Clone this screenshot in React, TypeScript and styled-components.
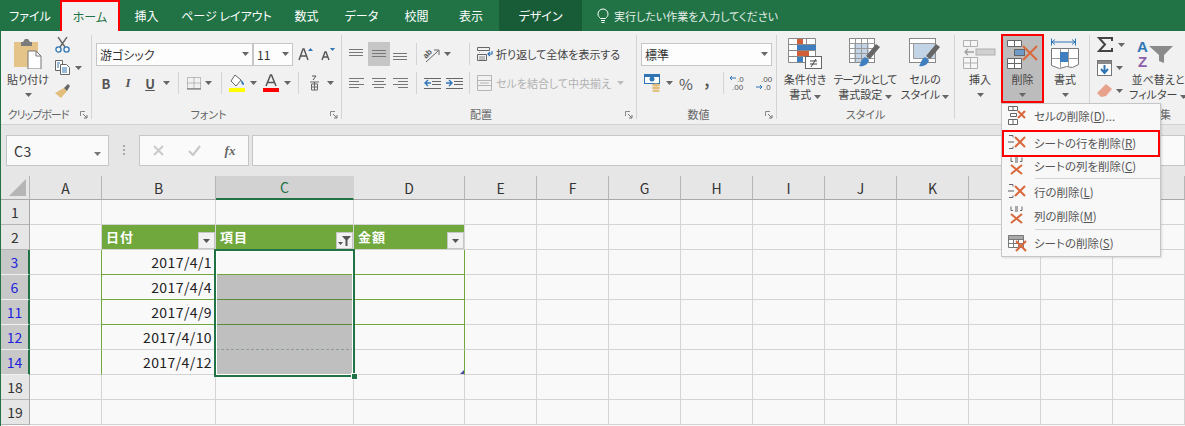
import React from 'react';
import styled, { createGlobalStyle } from 'styled-components';

const GREEN = '#217346';
const TABLE = '#70a83e';

const GlobalStyle = createGlobalStyle`
  html, body { margin: 0; padding: 0; background: #f9f9f9; }
  body {
    font-family: "Noto Sans CJK JP", "Liberation Sans", sans-serif;
    font-feature-settings: "palt";
  }
`;

const Window = styled.div`
  position: relative;
  width: 1184px;
  height: 426px;
  overflow: hidden;
  border-left: 1px solid ${GREEN};
`;

/* ---------- title bar ---------- */
const TabBar = styled.div`
  display: flex;
  height: 31px;
  margin-left: -1px;
  background: ${GREEN};
`;

const Tab = styled.div<{ $w: number; $active?: boolean; $dark?: boolean }>`
  box-sizing: border-box;
  width: ${(p) => p.$w}px;
  display: flex;
  align-items: center;
  justify-content: center;
  font-size: 12px;
  color: ${(p) => (p.$active ? GREEN : '#fff')};
  background: ${(p) => (p.$active ? '#f1f1f1' : p.$dark ? '#185c37' : 'transparent')};
  border: ${(p) => (p.$active ? '2px solid #f00' : 'none')};
  border-bottom: none;
`;

const TellMe = styled.div`
  display: flex;
  align-items: center;
  gap: 5px;
  margin-left: 15px;
  font-size: 11px;
  color: #e4efe8;
`;

/* ---------- ribbon ---------- */
const Ribbon = styled.div`
  display: flex;
  height: 93px;
  background: #f1f1f1;
  border-bottom: 1px solid #d2d2d2;
`;

const Group = styled.div<{ $w: number }>`
  flex: none;
  width: ${(p) => p.$w}px;
  display: flex;
  flex-direction: column;
`;

const GroupBody = styled.div<{ $left?: number; $column?: boolean }>`
  height: 75px;
  box-sizing: border-box;
  padding-left: ${(p) => p.$left ?? 0}px;
  display: flex;
  flex-direction: ${(p) => (p.$column ? 'column' : 'row')};
`;

const GroupLabel = styled.div<{ $launch?: boolean; $tight?: boolean }>`
  position: relative;
  height: 18px;
  line-height: 16px;
  padding-right: ${(p) => (p.$launch ? 16 : 0)}px;
  text-align: center;
  font-size: 11px;
  letter-spacing: ${(p) => (p.$tight ? -1 : 0)}px;
  color: #666;
`;

const Launcher = styled.svg`
  position: absolute;
  right: 3px;
  top: 5px;
`;

const GroupLine = styled.div`
  flex: none;
  width: 1px;
  margin: 4px 0 5px;
  background: #d4d4d4;
`;

const ToolRow = styled.div<{ $top: number; $left?: number }>`
  display: flex;
  align-items: center;
  height: 24px;
  margin-top: ${(p) => p.$top}px;
  margin-left: ${(p) => p.$left ?? 0}px;
`;

const Tool = styled.div<{ $w: number; $on?: boolean }>`
  flex: none;
  width: ${(p) => p.$w}px;
  height: 24px;
  display: flex;
  align-items: center;
  justify-content: center;
  background: ${(p) => (p.$on ? '#c6c6c6' : 'transparent')};
`;

const StyleLetter = styled(Tool)<{ $kind: 'b' | 'i' | 'u' }>`
  font-family: ${(p) => (p.$kind === 'i' ? '"Liberation Serif", serif' : 'inherit')};
  font-style: ${(p) => (p.$kind === 'i' ? 'italic' : 'normal')};
  text-decoration: ${(p) => (p.$kind === 'u' ? 'underline' : 'none')};
  font-weight: 700;
  font-size: 13px;
  color: #555;
`;

const SymbolTool = styled(Tool)<{ $bold?: boolean }>`
  box-sizing: border-box;
  padding-bottom: ${(p) => (p.$bold ? 8 : 0)}px;
  font-size: 15px;
  font-weight: ${(p) => (p.$bold ? 700 : 400)};
  color: #555;
`;

const ToolDivider = styled.div<{ $before: number; $after: number }>`
  flex: none;
  width: 1px;
  height: 22px;
  margin-left: ${(p) => p.$before}px;
  margin-right: ${(p) => p.$after}px;
  background: #d4d4d4;
`;

const Select = styled.div<{ $w: number }>`
  flex: none;
  box-sizing: border-box;
  width: ${(p) => p.$w}px;
  height: 23px;
  padding: 0 3px;
  display: flex;
  align-items: center;
  justify-content: space-between;
  background: #fdfdfd;
  border: 1px solid #c6c6c6;
  font-size: 12px;
  color: #333;
`;

const LabelText = styled.span<{ $muted?: boolean }>`
  margin-left: 3px;
  font-size: 11px;
  white-space: nowrap;
  color: ${(p) => (p.$muted ? '#b1b1b1' : '#444')};
`;

const BigButton = styled.div<{ $w: number; $marked?: boolean }>`
  flex: none;
  box-sizing: border-box;
  width: ${(p) => p.$w}px;
  height: 69px;
  margin-top: 3px;
  display: flex;
  flex-direction: column;
  align-items: center;
  font-size: 11px;
  line-height: 15px;
  color: #444;
  white-space: nowrap;
  background: ${(p) => (p.$marked ? '#bcbcbc' : 'transparent')};
  outline: ${(p) => (p.$marked ? '2px solid #f00' : 'none')};
  outline-offset: -2px;
`;

const TightLine = styled.div`
  letter-spacing: -0.8px;
`;

const BigIcon = styled.div`
  height: 35px;
  margin-bottom: 3px;
  display: flex;
  align-items: flex-end;
  justify-content: center;
`;

const BigCaret = styled.div`
  height: 15px;
  display: flex;
  align-items: center;
`;

const StackColumn = styled.div<{ $w: number }>`
  flex: none;
  box-sizing: border-box;
  width: ${(p) => p.$w}px;
  padding-top: 2px;
  display: flex;
  flex-direction: column;
`;

const StackTool = styled.div<{ $gap?: number }>`
  height: 23px;
  display: flex;
  align-items: center;
  gap: ${(p) => p.$gap ?? 4}px;
`;

/* ---------- formula bar ---------- */
const FormulaBar = styled.div`
  display: flex;
  align-items: center;
  height: 51px;
  padding: 0 0 0 5px;
  background: #e6e6e6;
  box-sizing: border-box;
`;

const FieldBox = styled.div<{ $w?: number }>`
  box-sizing: border-box;
  width: ${(p) => (p.$w ? `${p.$w}px` : 'auto')};
  flex: ${(p) => (p.$w ? 'none' : '1')};
  height: 31px;
  margin-left: ${(p) => (p.$w ? 0 : 3)}px;
  display: flex;
  align-items: center;
  background: #fafafa;
  border: 1px solid #c6c6c6;
`;

const NameText = styled.span`
  flex: 1;
  padding-left: 7px;
  font-size: 14px;
  color: #333;
  letter-spacing: 0.5px;
`;

const NameCaret = styled.span`
  padding: 0 7px 4px;
`;

const GripDots = styled.div`
  width: 2px;
  margin: 0 14px;
  height: 11px;
  background: repeating-linear-gradient(#aaa 0 2px, transparent 2px 4px);
`;

const FxSlot = styled.div`
  width: 36px;
  display: flex;
  justify-content: center;
`;

const FxText = styled.span`
  font-family: "Liberation Serif", serif;
  font-style: italic;
  font-weight: 700;
  font-size: 13px;
  color: #666;
`;

/* ---------- sheet ---------- */
const Sheet = styled.div`
  display: grid;
  grid-template-columns: 29px 72px 114px 138px 111px repeat(10, 72px);
  grid-template-rows: 24px repeat(9, 25px);
  background: #f9f9f9;
`;

const Corner = styled.div`
  display: flex;
  align-items: flex-end;
  justify-content: flex-end;
  padding: 0 3px 3px 0;
  background: #e6e6e6;
  border-right: 1px solid #b5b5b5;
  border-bottom: 1px solid #a8a8a8;
`;

const ColHead = styled.div<{ $on?: boolean }>`
  display: flex;
  align-items: center;
  justify-content: center;
  font-size: 14px;
  color: ${(p) => (p.$on ? GREEN : '#333')};
  background: ${(p) => (p.$on ? '#d2d2d2' : '#e6e6e6')};
  border-right: 1px solid ${(p) => (p.$on ? '#d2d2d2' : '#b5b5b5')};
  border-bottom: ${(p) => (p.$on ? `2px solid ${GREEN}` : '1px solid #a8a8a8')};
`;

const RowHead = styled.div<{ $on?: boolean }>`
  display: flex;
  align-items: center;
  justify-content: center;
  font-size: 14px;
  color: ${(p) => (p.$on ? '#2222dd' : '#333')};
  background: ${(p) => (p.$on ? '#c8c8c8' : '#e6e6e6')};
  border-right: ${(p) => (p.$on ? `2px solid ${GREEN}` : '1px solid #a8a8a8')};
  border-bottom: 1px solid ${(p) => (p.$on ? '#f0f0f0' : '#b5b5b5')};
`;

const Cell = styled.div<{
  $head?: boolean;
  $band?: boolean;
  $left?: boolean;
  $right?: boolean;
  $fill?: boolean;
  $dash?: boolean;
}>`
  position: relative;
  box-sizing: border-box;
  display: flex;
  align-items: ${(p) => (p.$head ? 'flex-end' : 'center')};
  justify-content: ${(p) => (p.$head ? 'space-between' : 'flex-end')};
  padding-right: ${(p) => (p.$head ? 0 : 3)}px;
  font-size: 14px;
  letter-spacing: 0.4px;
  color: #222;
  background: ${(p) => (p.$head ? TABLE : p.$fill ? '#bfbfbf' : 'transparent')};
  border-left: ${(p) => (p.$left ? `1px solid ${TABLE}` : 'none')};
  margin-left: ${(p) => (p.$left ? -1 : 0)}px;
  border-right: 1px solid ${(p) => (p.$right ? TABLE : '#d4d4d4')};
  border-bottom: 1px ${(p) => (p.$dash ? 'dashed #8f9f8f' : `solid ${p.$band ? (p.$fill ? '#5b8a3a' : TABLE) : '#d4d4d4'}`)};
`;

const HeadText = styled.span`
  align-self: center;
  margin: -2px 0 0 4px;
  font-size: 13px;
  font-weight: 700;
  letter-spacing: 1px;
  color: #fff;
`;

const FilterButton = styled.div`
  box-sizing: border-box;
  width: 17px;
  height: 17px;
  display: flex;
  align-items: center;
  justify-content: center;
  background: #f2f2f2;
  border: 1px solid #c6c6c6;
`;

const ResizeMark = styled.div`
  position: absolute;
  right: 0;
  bottom: 0;
  width: 0;
  height: 0;
  border-left: 4px solid transparent;
  border-bottom: 4px solid #4a4a9e;
`;

/* the range C3:C14 laid over the cells */
const Selection = styled.div`
  position: absolute;
  z-index: 2;
  left: -2px;
  top: -1px;
  box-sizing: border-box;
  width: 141px;
  height: 128px;
  border: 2px solid ${GREEN};
  box-shadow: inset 0 0 0 1px #fff;
  pointer-events: none;
`;

const FillHandle = styled.div`
  position: absolute;
  right: -5px;
  bottom: -5px;
  width: 5px;
  height: 5px;
  background: ${GREEN};
  border: 1px solid #fff;
`;

/* ---------- dropdown ---------- */
const Menu = styled.div`
  position: absolute;
  z-index: 3;
  left: 1000px;
  top: 103px;
  box-sizing: border-box;
  width: 160px;
  height: 154px;
  background: #f8f8f8;
  border: 1px solid #c6c6c6;
  box-shadow: 1px 1px 2px rgba(0, 0, 0, 0.12);
`;

const MenuItem = styled.div<{ $h: number; $marked?: boolean; $gap?: number }>`
  box-sizing: border-box;
  height: ${(p) => p.$h}px;
  margin-top: ${(p) => p.$gap ?? 0}px;
  padding-bottom: 2px;
  display: flex;
  align-items: center;
  font-size: 11.5px;
  color: #555;
  outline: ${(p) => (p.$marked ? '2px solid #f00' : 'none')};
  outline-offset: -2px;
`;

const MenuIcon = styled.div`
  flex: none;
  width: 32px;
  display: flex;
  justify-content: center;
`;

const MenuLine = styled.div`
  height: 1px;
  margin: 1px 0 1px 33px;
  background: #d4d4d4;
`;

const Key = styled.span`
  text-decoration: underline;
`;

/* ---------- icons ---------- */
const Caret = ({ c = '#666' }: { c?: string }) => (
  <svg width="7" height="4" viewBox="0 0 7 4"><path d="M0 0h7L3.500 4z" fill={c} /></svg>
);

const LaunchMark = () => (
  <Launcher width="8" height="8" viewBox="0 0 8 8">
    <path d="M.5 5V.5H5" fill="none" stroke="#888" />
    <path d="M3 3l4 4M7 4v3H4" fill="none" stroke="#777" />
  </Launcher>
);

const Lines = ({ rows, w = 16 }: { rows: number[][]; w?: number }) => (
  <svg width={w} height="14" viewBox={`0 0 ${w} 14`}>
    {rows.map(([x1, x2, y], i) => (
      <path key={i} d={`M${x1} ${y + 0.5}H${x2}`} stroke="#777" fill="none" />
    ))}
  </svg>
);

const PasteIcon = () => (
  <svg width="28" height="30" viewBox="0 0 28 30">
    <rect x="0" y="3" width="24" height="25" fill="#e5c48a" />
    <path d="M7 3h2l2-3h3l2 3h2v4H7z" fill="#7b7b7b" />
    <path d="M14 12h8l5 5v13H14z" fill="#fff" stroke="#777" />
    <path d="M22 12v5h5" fill="none" stroke="#777" />
  </svg>
);

const ScissorsIcon = () => (
  <svg width="15" height="16" viewBox="0 0 15 16">
    <path d="M3 0l7 10M12 0L5 10" stroke="#666" strokeWidth="1.4" fill="none" />
    <circle cx="3.500" cy="12.500" r="2.600" fill="none" stroke="#2f75b5" strokeWidth="1.3" />
    <circle cx="11.500" cy="12.500" r="2.600" fill="none" stroke="#2f75b5" strokeWidth="1.3" />
  </svg>
);

const CopyIcon = () => (
  <svg width="16" height="15" viewBox="0 0 16 15">
    <path d="M.5.500h7v10h-7z" fill="#fff" stroke="#666" />
    <path d="M5.500 4.500h6l3 3v7h-9z" fill="#fff" stroke="#666" />
    <path d="M2 3h3M2 5h2M2 7h2M7 8h5M7 10h5M7 12h5" stroke="#2f75b5" />
  </svg>
);

const BrushIcon = () => (
  <svg width="16" height="15" viewBox="0 0 16 15">
    <path d="M9 5l3 3L6 15 0 10z" fill="#e3bd7b" />
    <path d="M9 5l4-4 2 2-3 5z" fill="#666" />
  </svg>
);

const BigA = ({ up }: { up?: boolean }) => (
  <svg width="16" height="14" viewBox="0 0 16 14">
    <path d={up ? 'M1 13L5 2h1l4 11M2.500 9h6' : 'M2 13L5 5h1l3 8M3 10h5'} stroke="#555" strokeWidth="1.4" fill="none" />
    <path d={up ? 'M10 4l2.500-3L15 4z' : 'M10 1h5l-2.500 3z'} fill="#2f75b5" />
  </svg>
);

const BorderIcon = () => (
  <svg width="16" height="14" viewBox="0 0 16 14">
    <path d="M1.500 1.500h13v11h-13zM8 1.500v11M1.500 7h13" fill="none" stroke="#888" strokeDasharray="1 1" />
    <path d="M1 13h14" stroke="#666" />
  </svg>
);

const FillIcon = () => (
  <svg width="17" height="18" viewBox="0 0 17 18">
    <path d="M6 1l6 5-5 6-5-5z" fill="#fff" stroke="#666" />
    <path d="M12 6c2 1 3 3 3 5-2 0-3-2-3-5z" fill="#2f75b5" />
    <rect y="14" width="16" height="4" fill="#ff0" />
  </svg>
);

const FontColorIcon = () => (
  <svg width="16" height="18" viewBox="0 0 16 18">
    <path d="M3 12L7.500 1h1L13 12M4.500 8.500h7" stroke="#555" strokeWidth="1.500" fill="none" />
    <rect y="14" width="16" height="4" fill="#f00" />
  </svg>
);

const PhoneticIcon = () => (
  <svg width="9" height="16" viewBox="0 0 9 16">
    <path d="M2 1h4M6 1L3 5" stroke="#555" fill="none" />
    <path d="M0 7h9M1.500 9h6v6h-6zM4.500 7v8M1.500 12h6" stroke="#666" fill="none" />
  </svg>
);

const OrientIcon = () => (
  <svg width="18" height="17" viewBox="0 0 18 17">
    <text x="1" y="10" fontSize="8" fontWeight="700" fill="#555" fontFamily="Liberation Sans" transform="rotate(-45 6 8)">ab</text>
    <path d="M4 16L16 5M12 4h5v5" stroke="#666" fill="none" />
  </svg>
);

const IndentIcon = ({ flip }: { flip?: boolean }) => (
  <svg width="17" height="13" viewBox="0 0 17 13">
    <path d="M0 1.500h17M8 4.500h9M8 7.500h9M0 11.500h17" stroke="#666" fill="none" />
    <path d={flip ? 'M0 6h6M3 3l3 3-3 3' : 'M1 6h6M4 3L1 6l3 3'} stroke="#2f75b5" strokeWidth="1.400" fill="none" />
  </svg>
);

const WrapIcon = () => (
  <svg width="16" height="16" viewBox="0 0 16 16">
    <path d="M.5 1.500h12v3H.5zM.5 8.500h9v6h-9zM3 6.500h-.5" fill="none" stroke="#666" />
    <path d="M2 11h6M2 13h6" stroke="#888" />
    <path d="M15 5v3h-4M13 6l-2 2 2 2" fill="none" stroke="#2f75b5" strokeWidth="1.200" />
  </svg>
);

const MergeIcon = () => (
  <svg width="15" height="16" viewBox="0 0 15 16">
    <path d="M.5.500h14v15H.5zM.5 5.500h14M.5 10.500h14M3 8h9" fill="none" stroke="#b5b5b5" />
  </svg>
);

const MoneyIcon = () => (
  <svg width="17" height="18" viewBox="0 0 17 18">
    <rect x=".5" y=".5" width="15" height="9" fill="#fff" stroke="#2f75b5" />
    <rect x="1" y="1" width="14" height="2" fill="#2f75b5" />
    <circle cx="8" cy="5" r="2.500" fill="#2f75b5" />
    <ellipse cx="12" cy="11" rx="4" ry="1.500" fill="#e3bd7b" />
    <ellipse cx="12" cy="14" rx="4" ry="1.500" fill="#e3bd7b" />
    <ellipse cx="12" cy="17" rx="4" ry="1" fill="#e3bd7b" />
  </svg>
);

const DecimalIcon = ({ more }: { more?: boolean }) => (
  <svg width="18" height="16" viewBox="0 0 18 16">
    <text x={more ? 6 : 8} y="7" fontSize="8" fill="#555" fontFamily="Liberation Sans">{more ? '.00' : '.0'}</text>
    <text x={more ? 9 : 3} y="15" fontSize="8" fill="#555" fontFamily="Liberation Sans">{more ? '.0' : '.00'}</text>
    <path d={more ? 'M1 12h6M5 10l2 2-2 2' : 'M1 3h6M3 1L1 3l2 2'} stroke="#2f75b5" fill="none" />
  </svg>
);

const CondFormatIcon = () => (
  <svg width="35" height="31" viewBox="0 0 35 31">
    <path d="M.5.500h27v24H.5zM.5 6.500h27M.5 12.500h27M.5 18.500h27M9.500.5v24M18.500.5v24" fill="#fff" stroke="#888" />
    <rect x="9" y="1" width="6" height="5" fill="#d0603a" />
    <rect x="9" y="7" width="19" height="5" fill="#3f7fc0" />
    <rect x="9" y="13" width="12" height="5" fill="#d0603a" />
    <rect x="9" y="19" width="6" height="5" fill="#3f7fc0" />
    <rect x="17.500" y="18.500" width="16" height="12" fill="#fff" stroke="#666" />
    <path d="M22 23h7M22 26h7M28 21l-5 8" stroke="#444" fill="none" />
  </svg>
);

const TableBrushIcon = ({ plain }: { plain?: boolean }) => (
  <svg width="32" height="31" viewBox="0 0 32 31">
    {plain ? (
      <>
        <rect x=".5" y=".5" width="26" height="24" fill="#fff" stroke="#888" />
        <rect x="4" y="6" width="22" height="15" fill="#c3d4e6" />
        <path d="M.5 5.500h26M4.500 5.500v15h22" stroke="#999" fill="none" />
      </>
    ) : (
      <>
        <rect x=".5" y=".5" width="25" height="24" fill="#fff" stroke="#888" />
        <rect x="5" y="6" width="15" height="18" fill="#c3d4e6" />
        <path d="M.5 5.500h25M.5 10.500h25M.5 15.500h25M.5 20.500h25M6.500.5v24M12.500.5v24M18.500.5v24" stroke="#999" fill="none" />
      </>
    )}
    <path d="M27 6l4 3-10 12-4-3z" fill="#666" />
    <path d="M16 19l4 3c-1 5-6 7-10 6 2-2 2-7 6-9z" fill="#3f7fc0" />
  </svg>
);

const InsertIcon = () => (
  <svg width="34" height="29" viewBox="0 0 34 29">
    <path d="M.5.500h14v6H.5zM7.500.5v6M.5 17.500h14v11H.5zM.5 23h14M7.500 17.500v11" fill="#f6f6f6" stroke="#b0b0b0" />
    <rect x="13" y="9" width="19" height="6" fill="#d0d0d0" stroke="#b0b0b0" />
    <path d="M2 12h9M5 9l-3 3 3 3" stroke="#a0a0a0" strokeWidth="1.400" fill="none" />
  </svg>
);

const DeleteIcon = () => (
  <svg width="32" height="29" viewBox="0 0 32 29">
    <path d="M.5.500h14v6H.5zM7.500.5v6M.5 18.500h14v10H.5zM.5 23.500h14M7.500 18.500v10" fill="#fff" stroke="#666" />
    <rect x="7.500" y="9.500" width="10" height="6" fill="#6e9ac8" stroke="#666" />
    <path d="M16 6l14 14M30 6L16 20" stroke="#d9683c" strokeWidth="2" fill="none" />
  </svg>
);

const FormatIcon = () => (
  <svg width="28" height="31" viewBox="0 0 28 31">
    <path d="M1 4h23M4 1.500L1 4l3 2.500M21 1.500L24 4l-3 2.500M.5.500v7M24.500.5v7" stroke="#2f75b5" fill="none" />
    <path d="M.5 10.500h27v16l-6 3-6-1-7 2-8-3z" fill="#fff" stroke="#777" />
    <path d="M9.500 10.500v19M17.500 10.500v18M.5 20.500h27" stroke="#999" fill="none" />
    <rect x="9" y="14" width="8" height="10" fill="#3f7fc0" />
  </svg>
);

const SumIcon = () => (
  <svg width="16" height="15" viewBox="0 0 16 15">
    <path d="M15 4V1H2l6 6.500L2 14h13v-3" fill="none" stroke="#444" strokeWidth="2" />
  </svg>
);

const FillDownIcon = () => (
  <svg width="15" height="16" viewBox="0 0 15 16">
    <rect x=".5" y=".5" width="14" height="15" fill="#fff" stroke="#777" />
    <rect x="1" y="1" width="13" height="3" fill="#888" />
    <path d="M7.500 5v8M4 9l3.500 4L11 9" stroke="#2f75b5" strokeWidth="2" fill="none" />
  </svg>
);

const EraserIcon = () => (
  <svg width="15" height="13" viewBox="0 0 15 13">
    <path d="M9 0l6 5-6 7-5 1-4-4z" fill="#e8a28c" />
  </svg>
);

const SortFilterIcon = () => (
  <svg width="42" height="30" viewBox="0 0 42 30">
    <text x="0" y="13" fontSize="15" fontWeight="700" fill="#2f75b5" fontFamily="Liberation Sans">A</text>
    <text x="1" y="28" fontSize="15" fontWeight="700" fill="#8d5fa8" fontFamily="Liberation Sans">Z</text>
    <path d="M12 7h24l-9 9v8l-5-2v-6z" fill="#8a8a8a" />
  </svg>
);

const Bulb = () => (
  <svg width="12" height="16" viewBox="0 0 12 16">
    <path d="M3.500 10.500C2 9 1 8 1 6a5 5 0 0 1 10 0c0 2-1 3-2.500 4.500zM4 12.500h4M4.500 14.500h3" fill="none" stroke="#fff" />
  </svg>
);

const CrossMark = () => (
  <svg width="11" height="11" viewBox="0 0 11 11">
    <path d="M1 1l9 9M10 1L1 10" stroke="#c9c9c9" strokeWidth="1.800" fill="none" />
  </svg>
);

const CheckMark = () => (
  <svg width="13" height="11" viewBox="0 0 13 11">
    <path d="M1 6l4 4 7-9" stroke="#c9c9c9" strokeWidth="2.200" fill="none" />
  </svg>
);

const CornerMark = () => (
  <svg width="17" height="17" viewBox="0 0 17 17"><path d="M17 0v17H0z" fill="#b5b5b5" /></svg>
);

const MenuGlyph = ({ kind }: { kind: 'cell' | 'row' | 'col' | 'sheet' }) => {
  const x = kind === 'cell' ? 'M10 5l7 7M17 5l-7 7' : kind === 'col' ? 'M3 8l11 9M14 8L3 17' : 'M7 4l10 10M17 4L7 14';
  return (
    <svg width="20" height="19" viewBox="0 0 20 19">
      {kind === 'cell' && <path d="M.5.500h9v4h-9zM5 .5v4M.5 13.500h9v5h-9zM5 13.500v5M2.500 7.500h6v3h-6z" fill="#fff" stroke="#666" />}
      {kind === 'row' && <path d="M1 2.500h4M1 15.500h4M5 2.500v2M5 13.500v2" stroke="#666" fill="none" />}
      {kind === 'row' && <rect x="0" y="8" width="6" height="2" fill="#aaa" />}
      {kind === 'col' && <path d="M3 .5v4M14 .5v4M3 4.500h2M12 4.500h2" stroke="#666" fill="none" />}
      {kind === 'col' && <rect x="7" y="0" width="3" height="6" fill="#aaa" />}
      {kind === 'sheet' && <path d="M.5 2.500h15v12H.5zM.5 6.500h15M.5 10.500h15M5.500 2.500v12M10.500 2.500v12" fill="#fff" stroke="#777" />}
      {kind === 'sheet' && <rect x="1" y="3" width="14" height="3" fill="#aaa" />}
      <path d={kind === 'sheet' ? 'M8 8l10 10M18 8L8 18' : x} stroke="#d9683c" strokeWidth="2" fill="none" />
    </svg>
  );
};

const FunnelMark = () => (
  <svg width="13" height="10" viewBox="0 0 13 10">
    <path d="M0 6h5L2.500 9z" fill="#555" />
    <path d="M4 0h9L9.500 4v6H7.500V4z" fill="#555" />
  </svg>
);

/* ---------- data ---------- */
const COLUMNS = ['A', 'B', 'C', 'D', 'E', 'F', 'G', 'H', 'I', 'J', 'K', 'L', 'M', 'N'];

// these headers sit behind the open menu
const UNDER_MENU = ['L', 'M', 'N'];

const ROWS = [
  { no: 1 },
  { no: 2, head: true },
  { no: 3, date: '2017/4/1', on: true, band: true, first: true },
  { no: 6, date: '2017/4/4', on: true, band: true, fill: true },
  { no: 11, date: '2017/4/9', on: true, band: true, fill: true },
  { no: 12, date: '2017/4/10', on: true, fill: true, dash: true },
  { no: 14, date: '2017/4/12', on: true, fill: true, last: true },
  { no: 18 },
  { no: 19 },
];

const HEADINGS: Record<string, string> = { B: '日付', C: '項目', D: '金額' };

const App = () => {
  return (
    <Window>
      <GlobalStyle />
      <TabBar>
        <Tab $w={60}>ファイル</Tab>
        <Tab $w={60} $active>ホーム</Tab>
        <Tab $w={53}>挿入</Tab>
        <Tab $w={107}>ページ レイアウト</Tab>
        <Tab $w={53}>数式</Tab>
        <Tab $w={57}>データ</Tab>
        <Tab $w={53}>校閲</Tab>
        <Tab $w={56}>表示</Tab>
        <Tab $w={83} $dark>デザイン</Tab>
        <TellMe><Bulb />実行したい作業を入力してください</TellMe>
      </TabBar>

      <Ribbon>
        <Group $w={90}>
          <GroupBody>
            <BigButton $w={54}>
              <BigIcon><PasteIcon /></BigIcon>
              <div>貼り付け</div>
              <BigCaret><Caret /></BigCaret>
            </BigButton>
            <StackColumn $w={36}>
              <StackTool><ScissorsIcon /></StackTool>
              <StackTool><CopyIcon /><Caret /></StackTool>
              <StackTool><BrushIcon /></StackTool>
            </StackColumn>
          </GroupBody>
          <GroupLabel $launch $tight>クリップボード<LaunchMark /></GroupLabel>
        </Group>
        <GroupLine />

        <Group $w={249}>
          <GroupBody $column>
            <ToolRow $top={11} $left={4}>
              <Select $w={157}><span>游ゴシック</span><Caret /></Select>
              <Select $w={40}><span>11</span><Caret /></Select>
              <Tool $w={26}><BigA up /></Tool>
              <Tool $w={18}><BigA /></Tool>
            </ToolRow>
            <ToolRow $top={5} $left={3}>
              <StyleLetter $w={22} $kind="b">B</StyleLetter>
              <StyleLetter $w={22} $kind="i">I</StyleLetter>
              <StyleLetter $w={22} $kind="u">U</StyleLetter>
              <Tool $w={11}><Caret /></Tool>
              <ToolDivider $before={6} $after={6} />
              <Tool $w={17}><BorderIcon /></Tool>
              <Tool $w={13}><Caret /></Tool>
              <ToolDivider $before={6} $after={5} />
              <Tool $w={20}><FillIcon /></Tool>
              <Tool $w={12}><Caret /></Tool>
              <Tool $w={24}><FontColorIcon /></Tool>
              <Tool $w={9}><Caret /></Tool>
              <ToolDivider $before={6} $after={5} />
              <Tool $w={20}><PhoneticIcon /></Tool>
              <Tool $w={12}><Caret /></Tool>
            </ToolRow>
          </GroupBody>
          <GroupLabel $launch>フォント<LaunchMark /></GroupLabel>
        </Group>
        <GroupLine />

        <Group $w={294}>
          <GroupBody $column>
            <ToolRow $top={11} $left={4}>
              <Tool $w={22}><Lines rows={[[0, 14, 2], [0, 14, 5], [0, 14, 8]]} /></Tool>
              <Tool $w={22} $on><Lines rows={[[1, 15, 3], [1, 15, 6], [1, 15, 9]]} /></Tool>
              <Tool $w={22}><Lines rows={[[0, 14, 6], [0, 14, 9], [0, 14, 12]]} /></Tool>
              <ToolDivider $before={4} $after={4} />
              <Tool $w={20}><OrientIcon /></Tool>
              <Tool $w={12}><Caret /></Tool>
              <ToolDivider $before={16} $after={6} />
              <Tool $w={17}><WrapIcon /></Tool>
              <LabelText>折り返して全体を表示する</LabelText>
            </ToolRow>
            <ToolRow $top={5} $left={4}>
              <Tool $w={22}><Lines rows={[[0, 15, 2], [0, 10, 5], [0, 15, 8], [0, 10, 11]]} /></Tool>
              <Tool $w={22}><Lines rows={[[1, 15, 2], [3, 13, 5], [1, 15, 8], [3, 13, 11]]} /></Tool>
              <Tool $w={22}><Lines rows={[[0, 15, 2], [5, 15, 5], [0, 15, 8], [5, 15, 11]]} /></Tool>
              <ToolDivider $before={4} $after={4} />
              <Tool $w={22}><IndentIcon /></Tool>
              <Tool $w={22}><IndentIcon flip /></Tool>
              <ToolDivider $before={4} $after={6} />
              <Tool $w={17}><MergeIcon /></Tool>
              <LabelText $muted>セルを結合して中央揃え</LabelText>
              <Tool $w={20}><Caret c="#bdbdbd" /></Tool>
            </ToolRow>
          </GroupBody>
          <GroupLabel $launch>配置<LaunchMark /></GroupLabel>
        </Group>
        <GroupLine />

        <Group $w={139}>
          <GroupBody $column>
            <ToolRow $top={11} $left={4}>
              <Select $w={131}><span>標準</span><Caret /></Select>
            </ToolRow>
            <ToolRow $top={5} $left={4}>
              <Tool $w={22}><MoneyIcon /></Tool>
              <Tool $w={12}><Caret /></Tool>
              <SymbolTool $w={22}>%</SymbolTool>
              <SymbolTool $w={20} $bold>,</SymbolTool>
              <ToolDivider $before={6} $after={3} />
              <Tool $w={22}><DecimalIcon /></Tool>
              <Tool $w={30}><DecimalIcon more /></Tool>
            </ToolRow>
          </GroupBody>
          <GroupLabel $launch>数値<LaunchMark /></GroupLabel>
        </Group>
        <GroupLine />

        <Group $w={177}>
          <GroupBody $left={5}>
            <BigButton $w={46}>
              <BigIcon><CondFormatIcon /></BigIcon>
              <div>条件付き</div>
              <div>書式 <Caret /></div>
            </BigButton>
            <BigButton $w={74}>
              <BigIcon><TableBrushIcon /></BigIcon>
              <TightLine>テーブルとして</TightLine>
              <div>書式設定 <Caret /></div>
            </BigButton>
            <BigButton $w={46}>
              <BigIcon><TableBrushIcon plain /></BigIcon>
              <div>セルの</div>
              <div>スタイル <Caret /></div>
            </BigButton>
          </GroupBody>
          <GroupLabel>スタイル</GroupLabel>
        </Group>
        <GroupLine />

        <Group $w={134}>
          <GroupBody $left={4}>
            <BigButton $w={42}>
              <BigIcon><InsertIcon /></BigIcon>
              <div>挿入</div>
              <BigCaret><Caret /></BigCaret>
            </BigButton>
            <BigButton $w={43} $marked>
              <BigIcon><DeleteIcon /></BigIcon>
              <div>削除</div>
              <BigCaret><Caret /></BigCaret>
            </BigButton>
            <BigButton $w={42}>
              <BigIcon><FormatIcon /></BigIcon>
              <div>書式</div>
              <BigCaret><Caret /></BigCaret>
            </BigButton>
          </GroupBody>
          <GroupLabel>セル</GroupLabel>
        </Group>
        <GroupLine />

        <Group $w={140}>
          <GroupBody $left={7}>
            <StackColumn $w={33}>
              <StackTool $gap={5}><SumIcon /><Caret /></StackTool>
              <StackTool><FillDownIcon /><Caret /></StackTool>
              <StackTool><EraserIcon /><Caret /></StackTool>
            </StackColumn>
            <BigButton $w={56}>
              <BigIcon><SortFilterIcon /></BigIcon>
              <div>並べ替えと</div>
              <div>フィルター <Caret /></div>
            </BigButton>
          </GroupBody>
          <GroupLabel>編集</GroupLabel>
        </Group>
      </Ribbon>

      <FormulaBar>
        <FieldBox $w={103}>
          <NameText>C3</NameText>
          <NameCaret><Caret c="#777" /></NameCaret>
        </FieldBox>
        <GripDots />
        <FieldBox $w={110}>
          <FxSlot><CrossMark /></FxSlot>
          <FxSlot><CheckMark /></FxSlot>
          <FxSlot><FxText>fx</FxText></FxSlot>
        </FieldBox>
        <FieldBox />
      </FormulaBar>

      <Sheet>
        <Corner><CornerMark /></Corner>
        {COLUMNS.map((c) => (
          <ColHead key={c} $on={c === 'C'}>{UNDER_MENU.includes(c) ? '' : c}</ColHead>
        ))}
        {ROWS.map((row) => (
          <React.Fragment key={row.no}>
            <RowHead $on={row.on}>{row.no}</RowHead>
            {COLUMNS.map((c) => {
              const inTable = (row.head || row.date) && ['B', 'C', 'D'].includes(c);
              return (
                <Cell
                  key={c}
                  $head={row.head && inTable ? true : undefined}
                  $band={row.band && inTable ? true : undefined}
                  $left={c === 'B' && row.date ? true : undefined}
                  $right={c === 'D' && row.date ? true : undefined}
                  $fill={c === 'C' && row.fill}
                  $dash={c === 'C' && row.dash}
                >
                  {row.head && inTable && (
                    <>
                      <HeadText>{HEADINGS[c]}</HeadText>
                      <FilterButton>{c === 'C' ? <FunnelMark /> : <Caret c="#555" />}</FilterButton>
                    </>
                  )}
                  {c === 'B' && row.date}
                  {c === 'C' && row.first && <Selection><FillHandle /></Selection>}
                  {c === 'D' && row.last && <ResizeMark />}
                </Cell>
              );
            })}
          </React.Fragment>
        ))}
      </Sheet>

      <Menu>
        <MenuItem $h={25}><MenuIcon><MenuGlyph kind="cell" /></MenuIcon>セルの削除(<Key>D</Key>)...</MenuItem>
        <MenuItem $h={27} $gap={1} $marked><MenuIcon><MenuGlyph kind="row" /></MenuIcon>シートの行を削除(<Key>R</Key>)</MenuItem>
        <MenuItem $h={20}><MenuIcon><MenuGlyph kind="col" /></MenuIcon>シートの列を削除(<Key>C</Key>)</MenuItem>
        <MenuLine />
        <MenuItem $h={25}><MenuIcon><MenuGlyph kind="row" /></MenuIcon>行の削除(<Key>L</Key>)</MenuItem>
        <MenuItem $h={23}><MenuIcon><MenuGlyph kind="col" /></MenuIcon>列の削除(<Key>M</Key>)</MenuItem>
        <MenuLine />
        <MenuItem $h={25}><MenuIcon><MenuGlyph kind="sheet" /></MenuIcon>シートの削除(<Key>S</Key>)</MenuItem>
      </Menu>
    </Window>
  );
};

export default App;
